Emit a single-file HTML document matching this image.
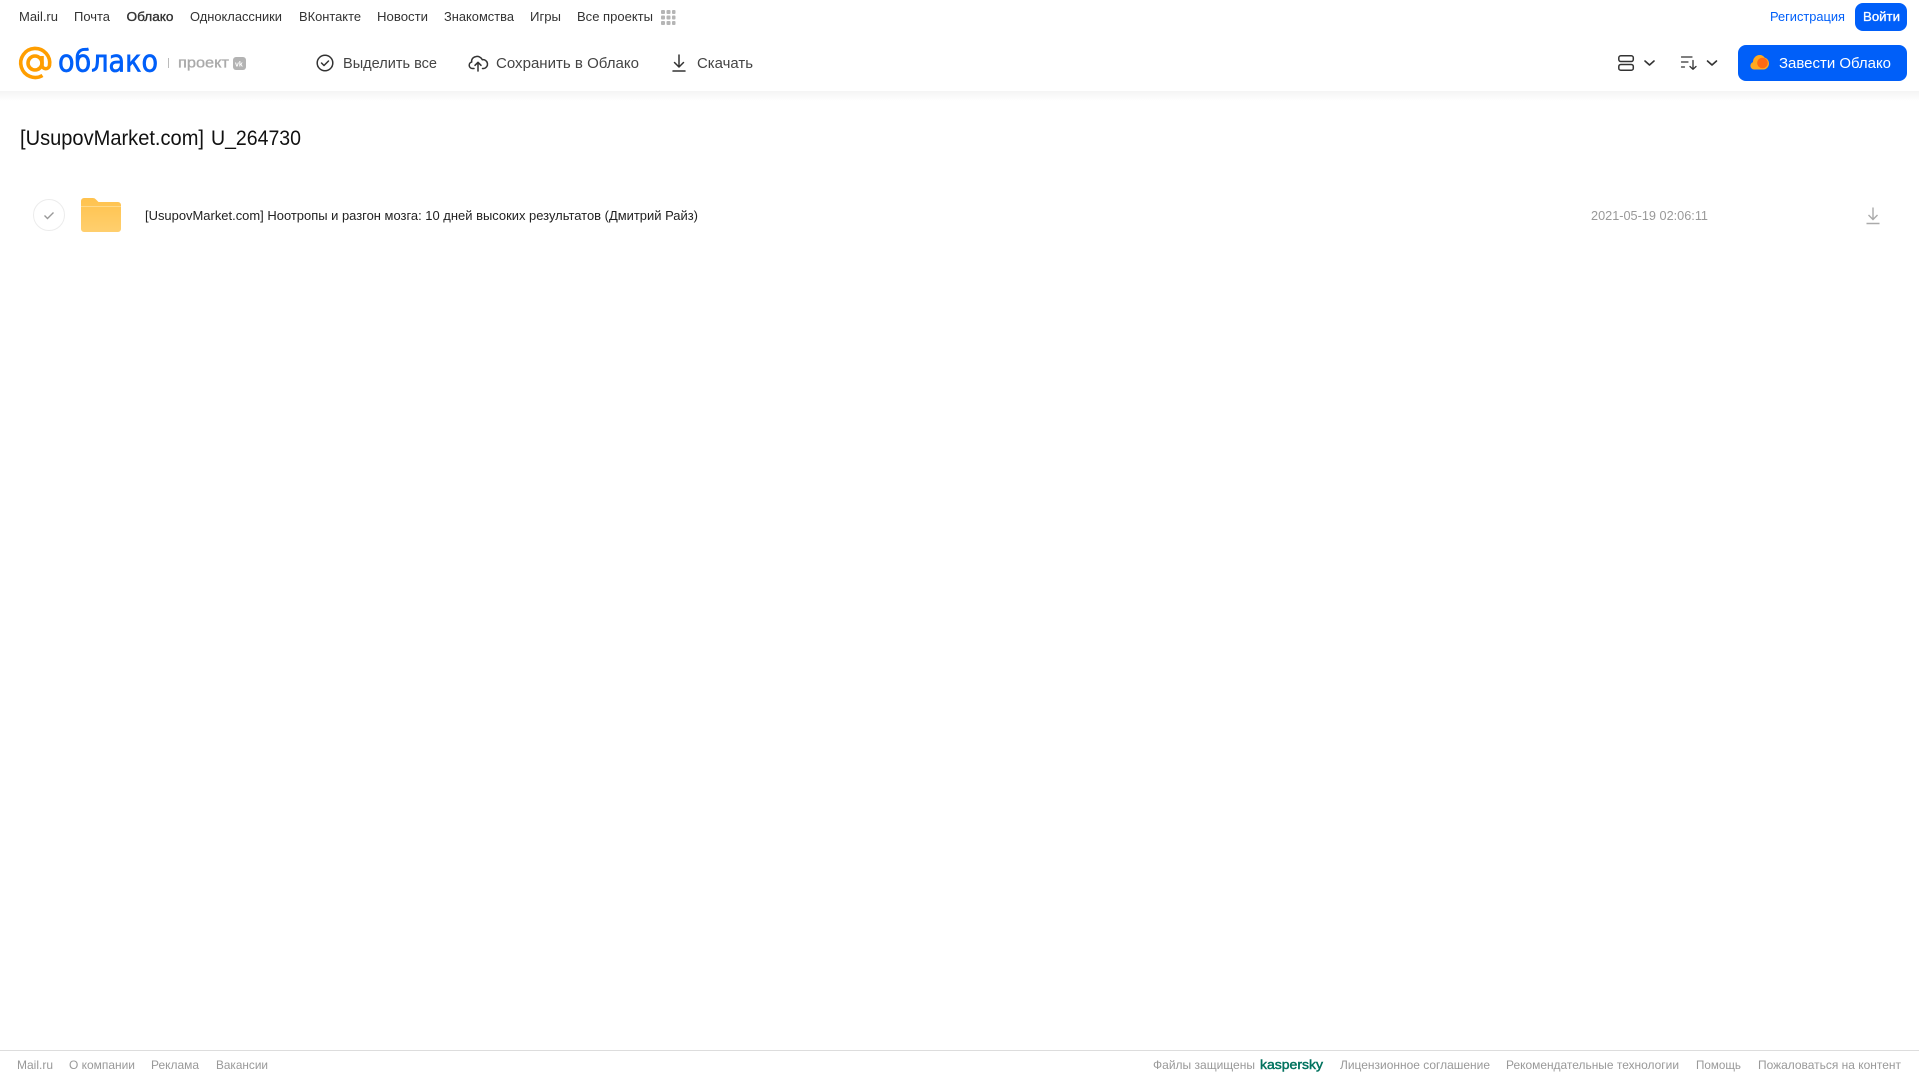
<!DOCTYPE html>
<html lang="ru">
<head>
<meta charset="utf-8">
<title>[UsupovMarket.com] U_264730</title>
<style>
html,body{margin:0;padding:0;background:#fff;width:1919px;height:1079px;overflow:hidden}
svg{display:block;position:absolute;left:0;top:0}
text{font-family:"Liberation Sans",Arial,sans-serif;white-space:pre}
.n{font-size:13px;fill:#333}
.t{font-size:15px;fill:#444}
.f{font-size:12px;fill:#999}
</style>
</head>
<body>
<svg width="1919" height="1079" viewBox="0 0 1919 1079" xmlns="http://www.w3.org/2000/svg">
<defs>
<linearGradient id="sh" x1="0" y1="0" x2="0" y2="1"><stop offset="0" stop-color="#f4f4f4"/><stop offset="1" stop-color="#fff"/></linearGradient>
<linearGradient id="fo" x1="0" y1="0" x2="0" y2="1"><stop offset="0" stop-color="#ffc24d"/><stop offset="1" stop-color="#ffcf6e"/></linearGradient>
</defs>
<rect x="0" y="91" width="1919" height="10" fill="url(#sh)"/>

<!-- top nav -->
<text class="n" x="19" y="21" textLength="39" lengthAdjust="spacingAndGlyphs">Mail.ru</text>
<text class="n" x="74" y="21" textLength="36" lengthAdjust="spacingAndGlyphs">Почта</text>
<text class="n" x="126.500" y="21" textLength="47" lengthAdjust="spacingAndGlyphs" stroke="#333" stroke-width="0.350">Облако</text>
<text class="n" x="190" y="21" textLength="92" lengthAdjust="spacingAndGlyphs">Одноклассники</text>
<text class="n" x="299" y="21" textLength="62" lengthAdjust="spacingAndGlyphs">ВКонтакте</text>
<text class="n" x="377" y="21" textLength="51" lengthAdjust="spacingAndGlyphs">Новости</text>
<text class="n" x="444" y="21" textLength="70" lengthAdjust="spacingAndGlyphs">Знакомства</text>
<text class="n" x="530" y="21" textLength="31" lengthAdjust="spacingAndGlyphs">Игры</text>
<text class="n" x="577" y="21" textLength="76" lengthAdjust="spacingAndGlyphs">Все проекты</text>
<g fill="#b5b5b5">
<rect x="661" y="10" width="4" height="4" rx="1"/><rect x="666.500" y="10" width="4" height="4" rx="1"/><rect x="672" y="10" width="3.500" height="4" rx="1"/>
<rect x="661" y="15.500" width="4" height="4" rx="1"/><rect x="666.500" y="15.500" width="4" height="4" rx="1"/><rect x="672" y="15.500" width="3.500" height="4" rx="1"/>
<rect x="661" y="21" width="4" height="4" rx="1"/><rect x="666.500" y="21" width="4" height="4" rx="1"/><rect x="672" y="21" width="3.500" height="4" rx="1"/>
</g>
<text x="1770" y="21" font-size="13" fill="#005ff9" textLength="75" lengthAdjust="spacingAndGlyphs">Регистрация</text>
<rect x="1855" y="3" width="52" height="28" rx="8" fill="#005ff9"/>
<text x="1863" y="21" font-size="13" fill="#fff" stroke="#fff" stroke-width="0.300" textLength="37" lengthAdjust="spacingAndGlyphs">Войти</text>

<!-- logo -->
<g fill="none" stroke="#ff9e00" stroke-width="3.600">
<circle cx="35" cy="63" r="7"/>
<path d="M42 56v9.500a3.800 3.800 0 0 0 7.500 0A14.500 14.500 0 1 0 42.500 75.500"/>
</g>
<text x="58" y="71.500" font-size="30" style="font-family:'DejaVu Sans','Liberation Sans',sans-serif" fill="#005ff9" stroke="#005ff9" stroke-width="0.700" textLength="100" lengthAdjust="spacingAndGlyphs">облако</text>
<rect x="168" y="58" width="1" height="10" fill="#bbb"/>
<text x="178" y="67.500" font-size="15" fill="#aaa" stroke="#aaa" stroke-width="0.350" textLength="51" lengthAdjust="spacingAndGlyphs">проект</text>
<rect x="233" y="57" width="13" height="13" rx="3" fill="#b3b3b3"/>
<text x="235" y="66.500" font-size="7" font-weight="700" fill="#fff">vk</text>

<!-- toolbar -->
<g fill="none" stroke="#333" stroke-width="1.500" stroke-linecap="round" stroke-linejoin="round">
<circle cx="325" cy="63" r="7.800"/>
<path d="M321.500 63l2.500 2.500 4.500-4.500"/>
<path d="M474 68.500h-1.500a3.300 3.300 0 0 1-0.800-6.500 4.500 4.500 0 0 1 3.800-5.300 5.600 5.600 0 0 1 6.800 3 4.400 4.400 0 0 1 1.500 8.800h-1.300"/>
<path d="M478 71v-8.500M475 65.300l3-3 3 3"/>
<path d="M679 55v12M674.500 62.500l4.500 4.500 4.500-4.500M673 71h12"/>
</g>
<text class="t" x="343" y="68" textLength="94" lengthAdjust="spacingAndGlyphs">Выделить все</text>
<text class="t" x="496" y="68" textLength="143" lengthAdjust="spacingAndGlyphs">Сохранить в Облако</text>
<text class="t" x="697" y="68" textLength="56" lengthAdjust="spacingAndGlyphs">Скачать</text>

<!-- right toolbar -->
<g fill="none" stroke="#333" stroke-linecap="round" stroke-linejoin="round">
<rect x="1618.800" y="55.800" width="14.500" height="5.700" rx="2" stroke-width="1.500"/>
<rect x="1618.800" y="64.500" width="14.500" height="5.700" rx="2" stroke-width="1.500"/>
<path d="M1645 61l4.500 4 4.500-4" stroke-width="1.600"/>
<path d="M1681.500 57h10.500M1681.500 62h6.500M1681.500 67h3" stroke-width="1.200"/>
<path d="M1693 60.500v8.500M1690 66.500l3 2.800 3-2.800" stroke-width="1.300"/>
<path d="M1707.500 61l4.500 4 4.500-4" stroke-width="1.600"/>
</g>
<rect x="1738" y="45" width="169" height="36" rx="8" fill="#005ff9"/>
<path d="M1754 69.500a3.800 3.800 0 0 1-1-7.400 6.800 6.800 0 0 1 6.500-7.100c2.500 0 4 1 5 2.500a6 6 0 0 1 4.500 6 6 6 0 0 1-5.500 6z" fill="#ffa91f"/>
<circle cx="1762.500" cy="63" r="5.300" fill="#ff6a13"/>
<text x="1779" y="68" font-size="15" fill="#fff" textLength="112" lengthAdjust="spacingAndGlyphs">Завести Облако</text>

<!-- title -->
<text x="20" y="145" font-size="21" fill="#111" textLength="184" lengthAdjust="spacingAndGlyphs">[UsupovMarket.com]</text>
<text x="211" y="145" font-size="21" fill="#111" textLength="90" lengthAdjust="spacingAndGlyphs">U_264730</text>

<!-- row -->
<circle cx="49" cy="215" r="15.500" fill="#fff" stroke="#ececec"/>
<path d="M44.500 215.500l3 3 6-6" fill="none" stroke="#999" stroke-width="1.400"/>
<path d="M81 201a3 3 0 0 1 3-3h9a4 4 0 0 1 3 1.500l2.500 2.500H118a3 3 0 0 1 3 3v24a3 3 0 0 1-3 3H84a3 3 0 0 1-3-3z" fill="url(#fo)"/>
<rect x="81" y="206" width="40" height="1" fill="#ffd98a"/>
<text x="145" y="220" font-size="13" fill="#222" textLength="553" lengthAdjust="spacingAndGlyphs">[UsupovMarket.com] Ноотропы и разгон мозга: 10 дней высоких результатов (Дмитрий Райз)</text>
<text x="1591" y="220" font-size="13" fill="#999" textLength="117" lengthAdjust="spacingAndGlyphs">2021-05-19 02:06:11</text>
<path d="M1873 207.500v12M1868.500 215l4.500 4.500 4.500-4.500M1866.500 223.500h13" fill="none" stroke="#aaa" stroke-width="1.400"/>

<!-- footer -->
<rect x="0" y="1050" width="1919" height="1" fill="#ddd"/>
<text class="f" x="17" y="1069" textLength="36" lengthAdjust="spacingAndGlyphs">Mail.ru</text>
<text class="f" x="69" y="1069" textLength="66" lengthAdjust="spacingAndGlyphs">О компании</text>
<text class="f" x="151" y="1069" textLength="48" lengthAdjust="spacingAndGlyphs">Реклама</text>
<text class="f" x="216" y="1069" textLength="52" lengthAdjust="spacingAndGlyphs">Вакансии</text>
<text class="f" x="1153" y="1069" textLength="102" lengthAdjust="spacingAndGlyphs">Файлы защищены</text>
<text x="1260" y="1069" font-size="13" fill="#00725e" stroke="#00725e" stroke-width="0.450" textLength="63" lengthAdjust="spacingAndGlyphs">kaspersky</text>
<text class="f" x="1340" y="1069" textLength="150" lengthAdjust="spacingAndGlyphs">Лицензионное соглашение</text>
<text class="f" x="1506" y="1069" textLength="173" lengthAdjust="spacingAndGlyphs">Рекомендательные технологии</text>
<text class="f" x="1696" y="1069" textLength="45" lengthAdjust="spacingAndGlyphs">Помощь</text>
<text class="f" x="1758" y="1069" textLength="143" lengthAdjust="spacingAndGlyphs">Пожаловаться на контент</text>
</svg>
</body>
</html>
